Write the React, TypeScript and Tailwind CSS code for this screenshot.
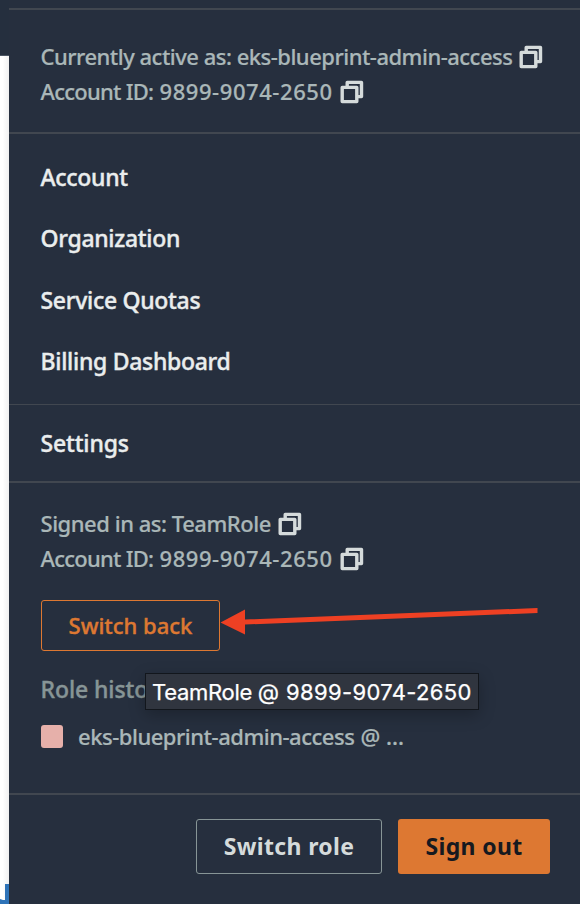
import type { ReactNode } from "react";

function CopyIcon() {
  return (
    <svg width="24" height="24" viewBox="0 0 24 24" fill="none" stroke="#d5dbdb" strokeWidth="3.4" strokeLinejoin="round" className="shrink-0">
      <path d="M7.2 6.6V2.4H21.5V16.6H18" />
      <path d="M2.2 7.4H16.8V21.6H2.2Z" />
    </svg>
  );
}

function InfoLine({ children }: { children: ReactNode }) {
  return (
    <div className="flex h-[35px] items-center gap-[7px] whitespace-nowrap">
      {children}
      <CopyIcon />
    </div>
  );
}

function AccountId() {
  return (
    <InfoLine>
      <span className="flex">
        <span className="w-[119px] tracking-[-0.75px]">Account ID:</span>
        <span className="w-[173px] tracking-[0.57px]">9899-9074-2650</span>
      </span>
    </InfoLine>
  );
}

function MenuItem({ label }: { label: string }) {
  return (
    <a className="flex h-[61.3px] items-center">
      <span>{label}</span>
    </a>
  );
}

export default function App() {
  return (
    <div className="relative flex h-[904px] w-[580px] overflow-hidden bg-white font-['Noto_Sans',sans-serif] text-[22px] font-medium text-[#aab7b8] [-webkit-text-stroke:0.2px]">
      <div className="flex w-[9px] shrink-0 flex-col justify-between bg-linear-to-r from-white from-30% to-[#f0f0f0]">
        <div className="h-[56px] border-b border-[#4b5563] bg-[#252f3e]" />
        <svg width="9" height="20" viewBox="0 0 9 20">
          <path d="M5 0H9V20H0V15L3 16H5Z" fill="#2e73b8" />
        </svg>
      </div>
      <div className="flex w-[571px] flex-col bg-[#262f3e] pt-2">
        <section className="h-[124px] border-t-2 border-[#414750] pl-[31.5px] pt-[29px]">
          <InfoLine>
            <span className="tracking-[-0.505px]">Currently active as: eks-blueprint-admin-access</span>
          </InfoLine>
          <AccountId />
        </section>
        <nav className="flex h-[272px] flex-col border-t-2 border-[#414750] pl-[31.5px] pt-[12.7px] text-[23px] tracking-[-0.3px] text-[#eaeded] [-webkit-text-stroke:0.4px]">
          <MenuItem label="Account" />
          <MenuItem label="Organization" />
          <MenuItem label="Service Quotas" />
          <MenuItem label="Billing Dashboard" />
        </nav>
        <nav className="flex h-[77px] items-center border-t border-[#414750] pl-[31.5px] pt-px text-[23px] tracking-[-0.15px] text-[#eaeded] [-webkit-text-stroke:0.4px]">
          <span>Settings</span>
        </nav>
        <section className="h-[312px] border-t-2 border-[#414750] pl-[31.5px] pt-[23px]">
          <InfoLine>
            <span className="tracking-[-0.47px]">Signed in as: TeamRole</span>
          </InfoLine>
          <AccountId />
          <button className="ml-[0.5px] mt-[24px] flex h-[51px] w-[179px] items-center justify-center rounded-[3px] border border-[#dd7832] text-[#dd7832] [-webkit-text-stroke:0.4px]">
            <span>Switch back</span>
          </button>
          <div className="mt-[21px] flex h-[35px] items-center text-[23px] tracking-[-0.1px] text-[#879596] [-webkit-text-stroke:0.4px]">
            <span>Role history</span>
          </div>
          <div className="ml-[0.5px] mt-[12px] flex h-[35px] items-center gap-[15px]">
            <i className="h-[23px] w-[22px] rounded-[3px] bg-[#e6b0aa]" />
            <span className="flex gap-[6px] whitespace-nowrap">
              <span className="tracking-[-0.48px]">eks-blueprint-admin-access</span>
              <span>@ ...</span>
            </span>
          </div>
        </section>
        <footer className="flex h-[111px] justify-end gap-4 border-t-2 border-[#414750] pr-[30px] pt-[24px] text-[23px] font-bold tracking-[0.35px] [-webkit-text-stroke:0px]">
          <button className="flex h-[55px] w-[186px] items-center justify-center rounded-[3px] border border-[#879596] text-[#d5dbdb]">
            <span>Switch role</span>
          </button>
          <button className="flex h-[55px] w-[152px] items-center justify-center rounded-[3px] bg-[#dd7832] text-[#16191f]">
            <span>Sign out</span>
          </button>
        </footer>
      </div>
      <svg className="absolute left-[215px] top-[600px]" width="330" height="40" viewBox="215 600 330 40">
        <path d="M220.5 622.5L245 609.5V619.5L537.5 608V613L245 624.5V634.5Z" fill="#ee4023" />
      </svg>
      <div className="absolute left-[145px] top-[673px] flex h-[37px] w-[334px] items-center border border-[#12161c] bg-[#30353f] pl-[6px] pt-px font-['Inter',sans-serif] font-normal text-white shadow-[0_5px_16px_rgba(0,0,0,0.25)] [-webkit-text-stroke:0.25px]">
        <span className="flex whitespace-nowrap">
          <span className="w-[134px] tracking-[-0.3px]">TeamRole @</span>
          <span className="tracking-[0.35px]">9899-9074-2650</span>
        </span>
      </div>
    </div>
  );
}
